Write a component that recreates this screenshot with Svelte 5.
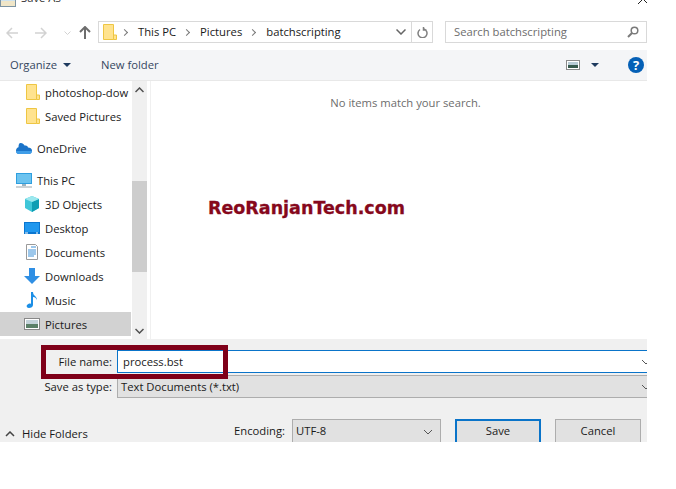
<script>
  const folders = ['photoshop-dow', 'Saved Pictures'];
  const places = ['3D Objects', 'Desktop', 'Documents', 'Downloads', 'Music', 'Pictures'];
</script>

{#snippet folder(cls)}
  <svg class={cls} width="14" height="18" viewBox="0 0 14 18">
    <path d="M.5 1.500h10v15h-10z" fill="#ffe38f" stroke="#eec643" />
    <path d="M10.500 12h3v4.500h-3z" fill="#ffe38f" stroke="#eec643" />
  </svg>
{/snippet}

{#snippet chevron(cls)}
  <svg class={cls} width="10" height="6" viewBox="0 0 10 6"><path d="M1 1l4 4 4-4" fill="none" stroke="#555" /></svg>
{/snippet}

{#snippet placeIcon(name)}
  <svg class="side-icon" width="16" height="16" viewBox="0 0 16 16">
    {#if name === '3D Objects'}
      <path d="M8 0l7 3v9l-7 4-7-4V3z" fill="#3fc6d8" />
      <path d="M8 6l7-3v9l-7 4z" fill="#0f9db3" />
      <path d="M1 3l7-3 7 3-7 3z" fill="#9ce8ee" />
    {:else if name === 'Desktop'}
      <rect x="0" y="2" width="16" height="12" fill="#0a76d0" />
      <rect x="1" y="3" width="14" height="9" fill="#1f97ee" />
      <path d="M1 13h3M12 13h2" stroke="#fff" />
    {:else if name === 'Documents'}
      <path d="M2.500.5h9l2 2v13h-11z" fill="#fff" stroke="#9a9a9a" />
      <path d="M7 3h5M4 6h8M4 8h8M4 10h8M4 12h6" stroke="#3b8fd6" />
    {:else if name === 'Downloads'}
      <path d="M5 0h6v8h5l-8 8-8-8h5z" fill="#2f8fe4" />
    {:else if name === 'Music'}
      <path d="M7 0h2c0 4 4 4 4 8-1-2-2-3-4-3v8c0 2-2 3-4 3s-3-2-2-3 3-2 4-1z" fill="#1c8fe6" />
    {:else}
      <rect x=".5" y="2.500" width="15" height="11" fill="#fff" stroke="#888" />
      <rect x="2" y="4" width="12" height="4" fill="#c4d3da" />
      <rect x="2" y="8" width="12" height="4" fill="#5b8068" />
    {/if}
  </svg>
{/snippet}

<div class="dialog">
  <div class="titlebar">
    <svg width="16" height="16" viewBox="0 0 16 16" class="title-icon">
      <rect x=".5" y=".5" width="15" height="15" fill="#cfe3ee" stroke="#7d94a3" />
      <rect x="1" y="10" width="14" height="5" fill="#f0e6c8" />
    </svg>
    <span class="title-text">Save As</span>
    <svg class="close" width="10" height="10" viewBox="0 0 10 10"><path d="M0 0l10 10M10 0L0 10" stroke="#222" /></svg>
  </div>

  <div class="navbar">
    <svg class="nav-btn" width="12" height="12" viewBox="0 0 12 12"><path d="M6 1L1 6l5 5M1 6h11" fill="none" stroke="#d2d2d2" stroke-width="1.500" /></svg>
    <svg class="nav-btn forward" width="12" height="12" viewBox="0 0 12 12"><path d="M6 1l5 5-5 5M11 6H0" fill="none" stroke="#d2d2d2" stroke-width="1.500" /></svg>
    <svg class="nav-down" width="7" height="5" viewBox="0 0 7 5"><path d="M.5.5l3 3 3-3" fill="none" stroke="#d2d2d2" /></svg>
    <svg class="nav-up" width="12" height="13" viewBox="0 0 12 13"><path d="M1 6l5-5 5 5M6 1v12" fill="none" stroke="#6d6d6d" stroke-width="2" /></svg>

    <div class="crumbs">
      {@render folder('crumb-folder')}
      <span class="sep"></span><span class="crumb">This PC</span>
      <span class="sep"></span><span class="crumb">Pictures</span>
      <span class="sep"></span><span class="crumb">batchscripting</span>
      <span class="crumb-fill"></span>
      <svg class="crumb-down" width="10" height="6" viewBox="0 0 10 6"><path d="M.5.5L5 5 9.500.5" fill="none" stroke="#666" stroke-width="1.500" /></svg>
      <span class="refresh">
        <svg width="11" height="12" viewBox="0 0 11 12"><path d="M3 3a4.500 4.500 0 1 0 4-.5M6.500.5v3h3" fill="none" stroke="#808080" stroke-width="1.500" transform="translate(0 .5)" /></svg>
      </span>
    </div>

    <div class="search">
      <span class="search-text">Search batchscripting</span>
      <svg width="12" height="12" viewBox="0 0 12 12"><circle cx="7.500" cy="4.500" r="3.300" fill="none" stroke="#7a7a7a" stroke-width="1.500" /><path d="M5 7l-4 4" stroke="#7a7a7a" stroke-width="2" /></svg>
    </div>
  </div>

  <div class="toolbar">
    <span class="tool">Organize</span>
    <span class="caret organize-caret"></span>
    <span class="tool new-folder">New folder</span>
    <span class="tool-fill"></span>
    <svg width="14" height="10" viewBox="0 0 14 10">
      <rect x=".5" y=".5" width="13" height="9" fill="#fff" stroke="#8a8a8a" />
      <rect x="2" y="2" width="10" height="3" fill="#b7cbd5" />
      <rect x="2" y="5" width="10" height="3" fill="#36594c" />
    </svg>
    <span class="caret view-caret"></span>
    <span class="help">?</span>
  </div>

  <div class="body">
    <div class="sidebar">
      <ul class="tree">
        {#each folders as name}
          <li class="row sub">{@render folder('side-folder')}<span>{name}</span></li>
        {/each}
        <li class="row top gap">
          <svg class="side-icon" width="16" height="11" viewBox="0 0 16 11">
            <path d="M4.500 0C7 0 8 1.500 8.500 2.500 11 2 12 3.500 12 4.500c2 0 4 1 4 3 0 2-1.500 3.500-3 3.500H3C1 11 0 9.500 0 7.500 0 5.500 1.500 4.500 2.500 4.300 2.500 2 3 0 4.500 0z" fill="#1b74c9" />
            <path d="M0 8h16c0 2-1.500 3-3 3H3C1 11 0 10 0 8z" fill="#3f9de8" />
          </svg>
          <span>OneDrive</span>
        </li>
        <li class="row top gap">
          <svg class="side-icon" width="16" height="15" viewBox="0 0 16 15">
            <rect x="0" y="0" width="16" height="11" fill="#2f9fdf" />
            <rect x="1" y="1" width="14" height="9" fill="#6cc3ef" />
            <path d="M6 11h4v2H6z" fill="#9cb3c0" />
            <path d="M0 14h16" stroke="#9aa6ad" />
          </svg>
          <span>This PC</span>
        </li>
        {#each places as name}
          <li class="row sub" class:selected={name === 'Pictures'}>{@render placeIcon(name)}<span>{name}</span></li>
        {/each}
      </ul>
      <div class="scrollbar">
        <svg class="arrow-up" width="9" height="6" viewBox="0 0 9 6"><path d="M.5 5l4-4 4 4" fill="none" stroke="#505050" stroke-width="1.500" /></svg>
        <span class="thumb"></span>
        <svg class="arrow-down" width="9" height="6" viewBox="0 0 9 6"><path d="M.5 1l4 4 4-4" fill="none" stroke="#505050" stroke-width="1.500" /></svg>
      </div>
    </div>
    <div class="results">No items match your search.</div>
  </div>

  <div class="footer">
    <div class="field name-field">
      <span class="field-label">File name:</span>
      <div class="input"><span>process.bst</span>{@render chevron('field-chev')}</div>
    </div>
    <div class="field type-field">
      <span class="field-label">Save as type:</span>
      <div class="select"><span>Text Documents (*.txt)</span>{@render chevron('field-chev')}</div>
    </div>
    <div class="actions">
      <span class="hide-folders">
        <svg width="10" height="6" viewBox="0 0 10 6"><path d="M1 5l4-4 4 4" fill="none" stroke="#444" stroke-width="1.500" /></svg>
        Hide Folders
      </span>
      <span class="enc-label">Encoding:</span>
      <div class="encoding"><span>UTF-8</span>{@render chevron('enc-chev')}</div>
      <button class="btn primary">Save</button>
      <button class="btn">Cancel</button>
    </div>
    <div class="highlight"></div>
  </div>

  <div class="watermark">ReoRanjanTech.com</div>
</div>

<style>
  :global(body) {
    background: #fff;
  }

  .dialog {
    position: relative;
    width: 647px;
    height: 442px;
    display: flex;
    flex-direction: column;
    font-family: "Open Sans", "Noto Sans", sans-serif;
    font-size: 11.25px;
    color: #1a1a1a;
    background: #fff;
  }

  .titlebar {
    height: 21px;
    position: relative;
    overflow: hidden;
    flex: none;
  }

  .title-icon {
    position: absolute;
    left: 0;
    top: -9px;
  }

  .title-text {
    position: absolute;
    left: 21px;
    top: -10px;
    font-size: 11.25px;
    color: #333;
  }

  .close {
    position: absolute;
    left: 638px;
    top: -6px;
  }

  .navbar {
    height: 29px;
    flex: none;
    display: flex;
    align-items: flex-start;
  }

  .nav-btn {
    margin: 6px 0 0 6px;
    flex: none;
  }

  .forward {
    margin-left: 17px;
  }

  .nav-down {
    margin: 10px 0 0 17px;
    flex: none;
  }

  .nav-up {
    margin: 5px 0 0 8px;
    flex: none;
  }

  .crumbs {
    margin-left: 7px;
    width: 335px;
    height: 22px;
    box-sizing: border-box;
    border: 1px solid #d9d9d9;
    display: flex;
    align-items: center;
    padding-left: 4px;
    flex: none;
  }

  .crumb-folder {
    flex: none;
    margin-right: -3px;
  }

  .sep {
    width: 4px;
    height: 4px;
    margin: 0 11px 0 8px;
    border-top: 1.500px solid #777;
    border-right: 1.500px solid #777;
    transform: rotate(45deg);
    flex: none;
  }

  .crumb {
    white-space: nowrap;
    margin-top: -2px;
  }

  .crumb-fill {
    flex: 1;
  }

  .crumb-down {
    margin-right: 5px;
  }

  .refresh {
    width: 20px;
    height: 20px;
    border-left: 1px solid #d9d9d9;
    display: flex;
    align-items: center;
    justify-content: center;
  }

  .search {
    margin-left: 12px;
    width: 202px;
    height: 22px;
    box-sizing: border-box;
    border: 1px solid #d9d9d9;
    display: flex;
    align-items: center;
    justify-content: space-between;
    padding: 0 7px 0 8px;
    color: #6d6d6d;
    flex: none;
  }

  .search-text {
    margin-top: -2px;
  }

  .toolbar {
    height: 31px;
    flex: none;
    box-sizing: border-box;
    background: #f4f5f7;
    border-bottom: 1px solid #e8e8e8;
    display: flex;
    align-items: center;
    padding: 0 3px 1px 10px;
    color: #34475f;
  }

  .caret {
    width: 0;
    height: 0;
    border-left: 4px solid transparent;
    border-right: 4px solid transparent;
    border-top: 4px solid #1e3a5f;
  }

  .organize-caret {
    margin-left: 6px;
  }

  .new-folder {
    margin-left: 30px;
  }

  .tool-fill {
    flex: 1;
  }

  .view-caret {
    margin: 0 29px 0 11px;
  }

  .help {
    width: 16px;
    height: 16px;
    border-radius: 50%;
    background: #0560b6;
    color: #fff;
    font-weight: 700;
    font-size: 13px;
    line-height: 16px;
    text-align: center;
  }

  .body {
    height: 258px;
    flex: none;
    display: flex;
  }

  .sidebar {
    width: 147px;
    display: flex;
    flex: none;
    position: relative;
  }

  .tree {
    list-style: none;
    margin: -1px 0 0;
    padding: 0;
    width: 132px;
    overflow: hidden;
    flex: none;
  }

  .row {
    height: 24px;
    display: flex;
    align-items: center;
    white-space: nowrap;
    overflow: hidden;
  }

  .sub {
    padding-left: 24px;
  }

  .sub .side-folder {
    margin-left: 2px;
  }

  .top {
    padding-left: 16px;
    color: #1a1a1a;
  }

  .gap {
    margin-top: 8px;
  }

  .selected {
    background: #d2d2d2;
    width: 107px;
  }

  .side-icon,
  .side-folder {
    flex: none;
    margin-right: 5px;
  }

  .scrollbar {
    width: 15px;
    background: #f0f0f0;
    position: relative;
    flex: none;
  }

  .arrow-up {
    position: absolute;
    left: 3px;
    top: 6px;
  }

  .arrow-down {
    position: absolute;
    left: 3px;
    top: 247px;
  }

  .thumb {
    position: absolute;
    left: 0;
    right: 0;
    top: 100px;
    height: 91px;
    background: #cdcdcd;
  }

  .results {
    flex: 1;
    margin-left: 3px;
    border-left: 1px solid #f0f0f0;
    text-align: center;
    padding: 14px 0 0 13px;
    color: #6d6d6d;
  }

  .footer {
    height: 103px;
    flex: none;
    background: #f0f0f0;
    position: relative;
    padding-top: 11px;
    box-sizing: border-box;
    overflow: hidden;
  }

  .field {
    display: flex;
    align-items: center;
  }

  .field-label {
    width: 112px;
    text-align: right;
    margin-right: 5px;
    flex: none;
  }

  .input,
  .select {
    flex: 1;
    display: flex;
    align-items: center;
    justify-content: space-between;
    box-sizing: border-box;
    padding-left: 5px;
  }

  .input {
    height: 23px;
    background: #fff;
    border-top: 1px solid #0a74c9;
    border-bottom: 1px solid #0a74c9;
    border-left: 1px solid #0a74c9;
  }

  .type-field {
    margin-top: 2px;
  }

  .select {
    height: 23px;
    background: #e1e1e1;
    border: 1px solid #adadad;
    border-right: 0;
    padding-left: 3px;
  }

  .field-chev {
    margin-right: -4px;
  }

  .actions {
    display: flex;
    align-items: flex-start;
    margin-top: 21px;
    position: relative;
  }

  .hide-folders {
    display: flex;
    align-items: center;
    gap: 7px;
    margin: 7px 0 0 5px;
    width: 229px;
    flex: none;
  }

  .enc-label {
    width: 53px;
    margin-top: 4px;
    flex: none;
  }

  .encoding {
    margin-left: 5px;
    width: 149px;
    height: 27px;
    box-sizing: border-box;
    background: #e1e1e1;
    border: 1px solid #adadad;
    display: flex;
    align-items: flex-start;
    justify-content: space-between;
    padding: 3px 3px 0 3px;
    flex: none;
  }

  .enc-chev {
    margin: 6px 4px 0 0;
  }

  .btn {
    font: inherit;
    width: 86px;
    height: 27px;
    margin-left: 14px;
    box-sizing: border-box;
    background: #e1e1e1;
    border: 1px solid #adadad;
    padding: 0 0 4px;
    color: #1a1a1a;
    flex: none;
  }

  .primary {
    border: 2px solid #0a74c9;
  }

  .highlight {
    position: absolute;
    left: 41px;
    top: 6px;
    width: 187px;
    height: 34px;
    box-sizing: border-box;
    border: 5px solid #7f0019;
  }

  .watermark {
    position: absolute;
    left: 208px;
    top: 197px;
    font-family: "DejaVu Sans", sans-serif;
    font-weight: 700;
    font-size: 17.5px;
    line-height: 22px;
    color: #86081c;
    -webkit-text-stroke: 0.3px #86081c;
    white-space: nowrap;
  }
</style>
